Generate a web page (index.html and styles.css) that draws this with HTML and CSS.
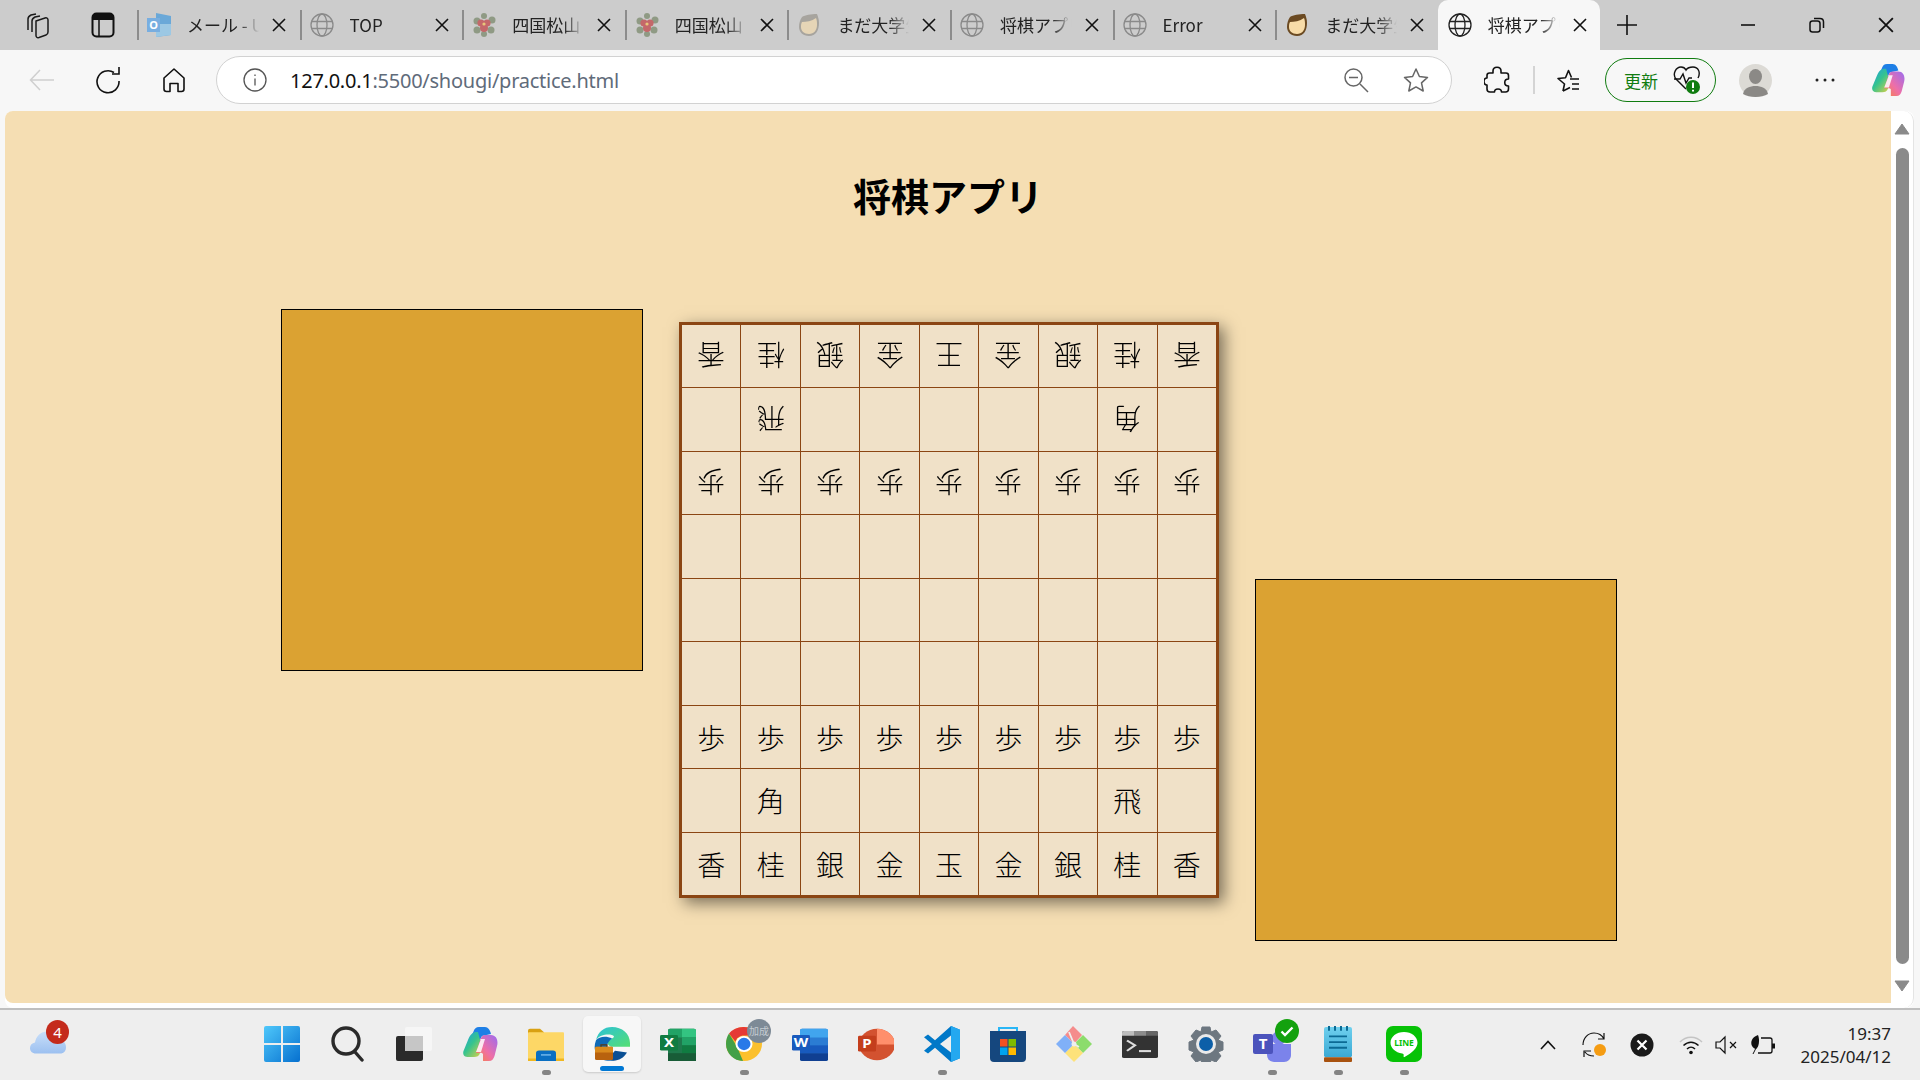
FILE: index.html

```html
<!DOCTYPE html>
<html lang="ja">
<head>
    <meta charset="UTF-8">
    <title>将棋アプリ</title>
    <link rel="stylesheet" href="styles.css">
</head>
<body>

    <svg class="defs" width="0" height="0">
        <defs>
            <symbol id="globe" viewBox="0 0 24 24">
                <g fill="none" stroke="currentColor" stroke-width="1.3">
                    <circle cx="12" cy="12" r="11"/>
                    <ellipse cx="12" cy="12" rx="5" ry="11"/>
                    <path d="M1.5 8.5h21M1.5 15.5h21"/>
                </g>
            </symbol>
            <symbol id="close" viewBox="0 0 14 14">
                <path d="M1 1l12 12M13 1L1 13" fill="none" stroke="currentColor" stroke-width="1.6"/>
            </symbol>
            <symbol id="flower" viewBox="0 0 24 24">
                <g fill="#8f9a84">
                    <circle cx="5" cy="8" r="3.5"/><circle cx="20" cy="7" r="3.5"/><circle cx="5" cy="17" r="3.5"/><circle cx="19" cy="17" r="3.5"/><circle cx="12" cy="3" r="3"/><circle cx="12" cy="21" r="3"/>
                </g>
                <g fill="#c4686a">
                    <circle cx="9" cy="10" r="3.6"/><circle cx="15" cy="10" r="3.6"/><circle cx="12" cy="15" r="4"/>
                </g>
                <circle cx="12" cy="11" r="1.6" fill="#e8c77a"/>
            </symbol>
            <symbol id="face" viewBox="0 0 24 24">
                <path d="M5 4c3-2 9-3 15-3 1 3 2 5 2 9 0 7-3 13-10 13C6 23 2 19 2 14c0-4 1-7 3-10z" fill="currentColor"/>
                <path d="M5 9c4 0 10-1 14-4 1 2 1 5 1 7 0 5-3 9-8 9-5 0-8-3-8-7 0-2 0-3 1-5z" fill="#f8dca8"/>
            </symbol>
            <linearGradient id="cp1" x1="0" y1="0" x2="1" y2="1">
                <stop offset="0" stop-color="#1b9de8"/><stop offset=".45" stop-color="#36c48d"/><stop offset="1" stop-color="#f4d23c"/>
            </linearGradient>
            <linearGradient id="cp2" x1="1" y1="0" x2="0" y2="1">
                <stop offset="0" stop-color="#9a6cf0"/><stop offset=".55" stop-color="#ee6fa8"/><stop offset="1" stop-color="#f7843d"/>
            </linearGradient>
            <symbol id="copilot" viewBox="0 0 36 36">
                <path d="M23 1h-6c-3 0-4.500 1.500-5.500 4.500L5 20l8 3 7-13 9-2c-1-4-3-7-6-7z" fill="#1e7fe6"/>
                <path d="M13 6C10 7 8 9 6 14L1.500 25c-1 3 .5 6 4 6H12c3 0 5-1 6-4l4-12-4-1-2-8z" fill="url(#cp1)"/>
                <path d="M21 35h6c3 0 4.500-2 5.500-5L35 20c1.500-5-.5-11-6-11h-6c-2 0-3 1-4 3l-5 15c3 0 6-1 7 1z" fill="url(#cp2)"/>
                <path d="M19 13h4l-4 13h-5z" fill="#fff" opacity=".85"/>
            </symbol>
        </defs>
    </svg>

    <div class="tabstrip">
        <div class="strip-tools">
            <svg width="28" height="28" viewBox="0 0 28 28" fill="none" stroke="#1a1a1a" stroke-width="1.500">
                <path d="M4 19V8c0-2 1-3 3-4l5-1"/>
                <path d="M8 21V10c0-2 1-3 3-4l5-1"/>
                <path d="M12 10l9-3c2-.5 3 .5 3 2v12c0 1.500-.5 2.500-2 3l-7 2.500c-2 .5-3-.5-3-2z"/>
            </svg>
            <svg width="24" height="26" viewBox="0 0 24 26">
                <rect x="1.500" y="1.500" width="21" height="23" rx="4" fill="none" stroke="#111" stroke-width="2"/>
                <path d="M1.500 5.500a4 4 0 0 1 4-4h13a4 4 0 0 1 4 4V8h-21z" fill="#111"/>
                <path d="M8 8v16" stroke="#111" stroke-width="1.500"/>
            </svg>
        </div>

        <div class="tab">
            <svg class="favicon" viewBox="0 0 24 24">
                <path d="M9 0l15 3v19l-15 2z" fill="#6aa8d8"/>
                <path d="M9 11h15v11l-15 2z" fill="#9cc8e4"/>
                <rect x="0" y="5" width="13" height="14" fill="#78aee0"/>
                <text x="6.500" y="16" class="fav-letter">O</text>
            </svg>
            <span class="tab-title">メール - UI</span>
            <svg class="tab-close"><use href="#close"/></svg>
        </div>
        <div class="tab">
            <svg class="favicon globe-dim"><use href="#globe"/></svg>
            <span class="tab-title">TOP</span>
            <svg class="tab-close"><use href="#close"/></svg>
        </div>
        <div class="tab">
            <svg class="favicon"><use href="#flower"/></svg>
            <span class="tab-title">四国松山</span>
            <svg class="tab-close"><use href="#close"/></svg>
        </div>
        <div class="tab">
            <svg class="favicon"><use href="#flower"/></svg>
            <span class="tab-title">四国松山</span>
            <svg class="tab-close"><use href="#close"/></svg>
        </div>
        <div class="tab">
            <svg class="favicon face-dim"><use href="#face"/></svg>
            <span class="tab-title">まだ大学生</span>
            <svg class="tab-close"><use href="#close"/></svg>
        </div>
        <div class="tab">
            <svg class="favicon globe-dim"><use href="#globe"/></svg>
            <span class="tab-title">将棋アプリ</span>
            <svg class="tab-close"><use href="#close"/></svg>
        </div>
        <div class="tab">
            <svg class="favicon globe-dim"><use href="#globe"/></svg>
            <span class="tab-title">Error</span>
            <svg class="tab-close"><use href="#close"/></svg>
        </div>
        <div class="tab">
            <svg class="favicon face-bright"><use href="#face"/></svg>
            <span class="tab-title">まだ大学生</span>
            <svg class="tab-close"><use href="#close"/></svg>
        </div>
        <div class="tab active">
            <svg class="favicon"><use href="#globe"/></svg>
            <span class="tab-title">将棋アプリ</span>
            <svg class="tab-close"><use href="#close"/></svg>
        </div>

        <svg class="new-tab" width="22" height="22" viewBox="0 0 22 22">
            <path d="M11 1v20M1 11h20" stroke="#111" stroke-width="1.600"/>
        </svg>

        <div class="window-btns">
            <div class="window-btn">
                <svg width="16" height="16" viewBox="0 0 16 16"><path d="M1 8h14" stroke="#111" stroke-width="1.600"/></svg>
            </div>
            <div class="window-btn">
                <svg width="16" height="16" viewBox="0 0 16 16" fill="none" stroke="#111" stroke-width="1.500">
                    <rect x="1" y="4" width="10" height="11" rx="2.500"/>
                    <path d="M5 1.500h6c2 0 3.500 1.500 3.500 3.500v6"/>
                </svg>
            </div>
            <div class="window-btn">
                <svg width="16" height="16"><use href="#close"/></svg>
            </div>
        </div>
    </div>

    <div class="toolbar">
        <div class="nav-btn">
            <svg width="26" height="24" viewBox="0 0 26 24" fill="none" stroke="#cfcfcf" stroke-width="1.500"><path d="M25 12H2M11 2L1.500 12 11 22"/></svg>
        </div>
        <div class="nav-btn">
            <svg width="26" height="28" viewBox="0 0 26 28" fill="none" stroke="#111" stroke-width="1.600"><path d="M19 6.500A11 11 0 1 0 24 15"/><path d="M24 1v7h-7"/></svg>
        </div>
        <div class="nav-btn">
            <svg width="24" height="26" viewBox="0 0 24 26" fill="none" stroke="#111" stroke-width="1.600" stroke-linejoin="round"><path d="M2 11L12 2l10 9v11c0 1.500-1 2.500-2.500 2.500H16v-8H8v8H4.500C3 24.500 2 23.500 2 22z"/></svg>
        </div>

        <div class="address">
            <svg class="address-info" width="24" height="24" viewBox="0 0 24 24" fill="none" stroke="#555" stroke-width="1.300">
                <circle cx="12" cy="12" r="11"/><path d="M12 10.500v7M12 6.500v1.600"/>
            </svg>
            <span class="url"><span class="url-host">127.0.0.1</span>:5500/shougi/practice.html</span>
            <svg class="address-zoom" width="26" height="26" viewBox="0 0 26 26" fill="none" stroke="#666" stroke-width="1.500">
                <circle cx="10.500" cy="10.500" r="8.500"/><path d="M6 10.500h9M17 17l8 8"/>
            </svg>
            <svg class="address-star" width="26" height="26" viewBox="0 0 26 26" fill="none" stroke="#666" stroke-width="1.500" stroke-linejoin="round">
                <path d="M13 2l3.400 7.500 8.100.9-6 5.500 1.700 8.100-7.200-4.100L5.800 24l1.700-8.100-6-5.500 8.100-.9z"/>
            </svg>
        </div>

        <div class="tool-btn tool-ext">
            <svg width="26" height="28" viewBox="0 0 26 28" fill="none" stroke="#111" stroke-width="1.600" stroke-linejoin="round">
                <path d="M9 5c0-5 8-5 8 0v2h5c1.500 0 2.500 1 2.500 2.500V13c-5 0-5 7 0 7v3c0 2-1 3-3 3h-4c0-4-7-4-7 0H6c-2 0-3-1-3-3v-4C-1 19-1 12 3 12V9.500C3 8 4 7 5.500 7H9z"/>
            </svg>
        </div>
        <div class="tool-sep"></div>
        <div class="tool-btn tool-fav">
            <svg width="26" height="26" viewBox="0 0 26 26" fill="none" stroke="#111" stroke-width="1.600" stroke-linejoin="round">
                <path d="M9 24l1.500-7L4 11.500l7.500-.7L14.500 3.500l3 7"/>
                <path d="M9 24l7-3.500M16 12h9M18 17h7M18 22h7"/>
            </svg>
        </div>
        <div class="update">
            <span>更新</span>
            <svg width="28" height="30" viewBox="0 0 28 30">
                <path d="M13 24L3 14C-1 9 3 2 8 2c2 0 4 1 5 3 2-3 5-3 7-3 5 0 8 5 5 11" fill="none" stroke="#111" stroke-width="1.400"/>
                <path d="M1 14h6l3-5 3 9 3-5h3" fill="none" stroke="#111" stroke-width="1.400"/>
                <circle cx="20" cy="22" r="7" fill="#107c10"/>
                <path d="M20 17.500v5.500M20 24.800v1.800" stroke="#fff" stroke-width="2"/>
            </svg>
        </div>
        <div class="avatar">
            <svg width="33" height="33" viewBox="0 0 33 33">
                <circle cx="16.500" cy="16.500" r="16.500" fill="#dcdad5"/>
                <ellipse cx="16.500" cy="12.500" rx="6.500" ry="7.500" fill="#8b8986"/>
                <path d="M4 30c1-6 7-8 12.500-8S28 24 29 30c-3 2-8 3-12.500 3S7 32 4 30z" fill="#8b8986"/>
            </svg>
        </div>
        <div class="tool-btn tool-more">
            <svg width="20" height="4" viewBox="0 0 20 4" fill="#222"><circle cx="2" cy="2" r="1.500"/><circle cx="10" cy="2" r="1.500"/><circle cx="18" cy="2" r="1.500"/></svg>
        </div>
        <svg class="tool-copilot" width="34" height="36"><use href="#copilot"/></svg>
    </div>

    <div class="viewport">
        <main class="page">
            <h1 class="title">将棋アプリ</h1>
            <div class="game">
                <div class="stand stand-gote"></div>

                <div class="board">
                    <div class="cell"><span class="gote">香</span></div><div class="cell"><span class="gote">桂</span></div><div class="cell"><span class="gote">銀</span></div><div class="cell"><span class="gote">金</span></div><div class="cell"><span class="gote">王</span></div><div class="cell"><span class="gote">金</span></div><div class="cell"><span class="gote">銀</span></div><div class="cell"><span class="gote">桂</span></div><div class="cell"><span class="gote">香</span></div>
                    <div class="cell"></div><div class="cell"><span class="gote">飛</span></div><div class="cell"></div><div class="cell"></div><div class="cell"></div><div class="cell"></div><div class="cell"></div><div class="cell"><span class="gote">角</span></div><div class="cell"></div>
                    <div class="cell"><span class="gote">歩</span></div><div class="cell"><span class="gote">歩</span></div><div class="cell"><span class="gote">歩</span></div><div class="cell"><span class="gote">歩</span></div><div class="cell"><span class="gote">歩</span></div><div class="cell"><span class="gote">歩</span></div><div class="cell"><span class="gote">歩</span></div><div class="cell"><span class="gote">歩</span></div><div class="cell"><span class="gote">歩</span></div>
                    <div class="cell"></div><div class="cell"></div><div class="cell"></div><div class="cell"></div><div class="cell"></div><div class="cell"></div><div class="cell"></div><div class="cell"></div><div class="cell"></div>
                    <div class="cell"></div><div class="cell"></div><div class="cell"></div><div class="cell"></div><div class="cell"></div><div class="cell"></div><div class="cell"></div><div class="cell"></div><div class="cell"></div>
                    <div class="cell"></div><div class="cell"></div><div class="cell"></div><div class="cell"></div><div class="cell"></div><div class="cell"></div><div class="cell"></div><div class="cell"></div><div class="cell"></div>
                    <div class="cell">歩</div><div class="cell">歩</div><div class="cell">歩</div><div class="cell">歩</div><div class="cell">歩</div><div class="cell">歩</div><div class="cell">歩</div><div class="cell">歩</div><div class="cell">歩</div>
                    <div class="cell"></div><div class="cell">角</div><div class="cell"></div><div class="cell"></div><div class="cell"></div><div class="cell"></div><div class="cell"></div><div class="cell">飛</div><div class="cell"></div>
                    <div class="cell">香</div><div class="cell">桂</div><div class="cell">銀</div><div class="cell">金</div><div class="cell">玉</div><div class="cell">金</div><div class="cell">銀</div><div class="cell">桂</div><div class="cell">香</div>
                </div>

                <div class="stand stand-sente"></div>
            </div>
        </main>
        <div class="scrollbar">
            <svg width="16" height="12" viewBox="0 0 16 12"><path d="M8 1l7 10H1z" fill="#8a8a8a" stroke="#8a8a8a" stroke-linejoin="round"/></svg>
            <div class="scroll-thumb"></div>
            <svg width="16" height="12" viewBox="0 0 16 12"><path d="M8 11L1 1h14z" fill="#8a8a8a" stroke="#8a8a8a" stroke-linejoin="round"/></svg>
        </div>
    </div>

    <div class="taskbar">
        <div class="weather">
            <svg width="36" height="24" viewBox="0 0 36 24">
                <defs><linearGradient id="cloud" x1="0" y1="0" x2="0" y2="1"><stop offset="0" stop-color="#c9dff9"/><stop offset="1" stop-color="#9cc0f0"/></linearGradient></defs>
                <path d="M6 23.500C2 23.500 0 21 0 18s2-5 5-5.500C6 6 11 1.500 17 1.500S27 5 29 10c4 0 7 3 7 7s-2 6.500-6 6.500z" fill="url(#cloud)"/>
            </svg>
            <span class="weather-badge">4</span>
        </div>

        <div class="apps">
            <div class="app">
                <svg width="36" height="36" viewBox="0 0 36 36">
                    <defs><linearGradient id="win" x1="0" y1="0" x2="1" y2="1"><stop offset="0" stop-color="#4fc8fb"/><stop offset="1" stop-color="#0670cf"/></linearGradient></defs>
                    <path d="M2 0h15v17H0V2a2 2 0 0 1 2-2zM19 0h15a2 2 0 0 1 2 2v15H19zM0 19h17v17H2a2 2 0 0 1-2-2zM19 19h17v15a2 2 0 0 1-2 2H19z" fill="url(#win)"/>
                </svg>
            </div>
            <div class="app">
                <svg width="34" height="36" viewBox="0 0 34 36" fill="none" stroke="#2a2a2a" stroke-width="3.400" stroke-linecap="round">
                    <circle cx="15" cy="15" r="13"/><path d="M24 26l7 8"/>
                </svg>
            </div>
            <div class="app">
                <svg width="36" height="34" viewBox="0 0 36 34">
                    <rect x="0" y="9" width="27" height="25" rx="2" fill="#2a2a2a"/>
                    <rect x="9" y="0" width="27" height="24" rx="2" fill="#f6f6f6"/>
                    <rect x="9" y="9" width="18" height="15" fill="#c6c6c6"/>
                </svg>
            </div>
            <div class="app">
                <svg width="36" height="36"><use href="#copilot"/></svg>
            </div>
            <div class="app running">
                <svg width="36" height="33" viewBox="0 0 36 38" preserveAspectRatio="none">
                    <path d="M0 3a2 2 0 0 1 2-2h10l4 4v8H0z" fill="#d9a112"/>
                    <rect x="0" y="5" width="36" height="33" rx="1" fill="#fdd766"/>
                    <path d="M0 35h36v3H0z" fill="#f0b71f"/>
                    <path d="M8 38v-9c0-2 1-3 3-3h14c2 0 3 1 3 3v9z" fill="#0a6fc2"/>
                    <path d="M13 31h10" stroke="#7fc0f0" stroke-width="1.500"/>
                </svg>
            </div>
            <div class="app edge">
                <svg width="36" height="36" viewBox="0 0 36 38" preserveAspectRatio="none">
                    <defs><linearGradient id="edge" x1="0" y1="0" x2="1" y2="1"><stop offset="0" stop-color="#2cc1d8"/><stop offset="1" stop-color="#54df72"/></linearGradient></defs>
                    <path d="M2 15C4 6 10 1 18 1c10 0 18 7 18 17v4H19c-3 0-6-2-5-5 1-4 5-3 6-6-2-3-14-3-18 4z" fill="url(#edge)"/>
                    <path d="M2 15c-3 8-1 16 6 20 6 3 15 2 19-3-7 2-13-1-14-7-1-5 1-8 5-12C12 10 5 11 2 15z" fill="#0f6ab8"/>
                    <path d="M16 36c6 2 13-1 17-8l-12-2c-3 3-5 7-5 10z" fill="#0a4f94"/>
                    <rect x="1" y="22" width="18" height="14" rx="1.500" fill="#b8620e"/>
                    <path d="M1 23.500A1.500 1.500 0 0 1 2.500 22h15a1.500 1.500 0 0 1 1.500 1.500V28H1z" fill="#d98a1c"/>
                    <path d="M7 22v-2h6v2" fill="none" stroke="#5a3a14" stroke-width="1.300"/>
                </svg>
                <span class="edge-bar"></span>
            </div>
            <div class="app">
                <svg width="36" height="33" viewBox="0 0 36 38" preserveAspectRatio="none">
                    <rect x="8" y="1" width="28" height="37" rx="2" fill="#1f7a4d"/>
                    <path d="M22 1h12a2 2 0 0 1 2 2v8H22z" fill="#33c481"/>
                    <path d="M8 3a2 2 0 0 1 2-2h12v10H8z" fill="#21a366"/>
                    <rect x="22" y="11" width="14" height="9" fill="#21a366"/>
                    <rect x="22" y="20" width="14" height="9" fill="#107c41"/>
                    <rect x="8" y="29" width="28" height="9" fill="#185c37"/>
                    <rect x="0" y="8" width="18" height="18" rx="1.500" fill="#107c41"/>
                    <text x="9" y="22" class="app-letter">X</text>
                </svg>
            </div>
            <div class="app running">
                <svg width="36" height="36" viewBox="0 0 36 38" preserveAspectRatio="none">
                    <circle cx="18" cy="19" r="18" fill="#fbc02d"/>
                    <path d="M18 1a18 18 0 0 1 15.600 9H18c-4 0-7.500 2.500-8.500 6.500L3 8A18 18 0 0 1 18 1z" fill="#e53935"/>
                    <path d="M3 8l8 14 6 14.900C8 37 0 29 0 19c0-4 1-8 3-11z" fill="#43a047"/>
                    <circle cx="18" cy="19" r="8.500" fill="#fff"/>
                    <circle cx="18" cy="19" r="6.500" fill="#2979e8"/>
                </svg>
                <span class="chrome-badge">加成</span>
            </div>
            <div class="app">
                <svg width="36" height="33" viewBox="0 0 36 38" preserveAspectRatio="none">
                    <rect x="8" y="1" width="28" height="37" rx="2" fill="#2b7cd3"/>
                    <path d="M8 3a2 2 0 0 1 2-2h24a2 2 0 0 1 2 2v8H8z" fill="#41a5ee"/>
                    <rect x="8" y="20" width="28" height="9" fill="#185abd"/>
                    <path d="M8 29h28v7a2 2 0 0 1-2 2H10a2 2 0 0 1-2-2z" fill="#103f91"/>
                    <rect x="0" y="8" width="18" height="18" rx="1.500" fill="#185abd"/>
                    <text x="9" y="22" class="app-letter">W</text>
                </svg>
            </div>
            <div class="app">
                <svg width="36" height="33" viewBox="0 0 36 38" preserveAspectRatio="none">
                    <circle cx="19" cy="19" r="18" fill="#d35230"/>
                    <path d="M19 1a18 18 0 0 1 18 18H19z" fill="#ff8f6b"/>
                    <rect x="0" y="9" width="18" height="18" rx="1.500" fill="#c43e1c"/>
                    <text x="9" y="23" class="app-letter">P</text>
                </svg>
            </div>
            <div class="app running">
                <svg width="36" height="36" viewBox="0 0 36 38" preserveAspectRatio="none">
                    <path d="M27 0l9 4v30l-9 4L11 23l-7 6-4-3 8-7-8-7 4-3 7 6z" fill="#0078c8"/>
                    <path d="M27 0l9 4v30l-9 4z" fill="#24a8f0"/>
                    <path d="M27 10L16 19l11 9z" fill="#efefef"/>
                </svg>
            </div>
            <div class="app">
                <svg width="36" height="36" viewBox="0 0 36 36">
                    <path d="M9 7V2h18v5" fill="none" stroke="#29b6f6" stroke-width="2"/>
                    <path d="M0 5h36v27a4 4 0 0 1-4 4H4a4 4 0 0 1-4-4z" fill="#15477e"/>
                    <rect x="10" y="13" width="7.500" height="7.500" fill="#f25022"/>
                    <rect x="18.500" y="13" width="7.500" height="7.500" fill="#7fba00"/>
                    <rect x="10" y="21.500" width="7.500" height="7.500" fill="#00a4ef"/>
                    <rect x="18.500" y="21.500" width="7.500" height="7.500" fill="#ffb900"/>
                </svg>
            </div>
            <div class="app">
                <svg width="36" height="36" viewBox="0 0 36 36">
                    <path d="M18 18L9 9l8-9 9 9z" fill="#f58c8c"/>
                    <path d="M18 18l9-9 9 9-9 9z" fill="#8cdc6c"/>
                    <path d="M18 18l9 9-9 9-9-9z" fill="#fde27a"/>
                    <path d="M18 18l-9 9-9-9 9-9z" fill="#80b0f8"/>
                    <circle cx="18" cy="18" r="2.500" fill="#eee"/>
                    <path d="M13 6l5 12 5 3" fill="none" stroke="#eee" stroke-width="1.800"/>
                </svg>
            </div>
            <div class="app">
                <svg width="36" height="27" viewBox="0 0 36 34" preserveAspectRatio="none">
                    <rect width="36" height="34" rx="2" fill="#333"/>
                    <path d="M0 2a2 2 0 0 1 2-2h10v6H0z" fill="#bdbdbd"/>
                    <rect x="12" y="0" width="12" height="6" fill="#8c8c8c"/>
                    <path d="M24 0h10a2 2 0 0 1 2 2v4H24z" fill="#666"/>
                    <path d="M5 12l8 6-8 7" fill="none" stroke="#ddd" stroke-width="2.400"/>
                    <rect x="17" y="24" width="12" height="2.600" fill="#ddd"/>
                </svg>
            </div>
            <div class="app">
                <svg width="36" height="36" viewBox="0 0 36 36">
                    <path d="M14 1h8l1 5 5-2 5 6-3 4 5 2v8l-5 2 3 4-5 6-5-2-1 4h-8l-1-4-5 2-5-6 3-4-5-2v-8l5-2-3-4 5-6 5 2z" fill="#6d7780" stroke="#6d7780" stroke-width="1" stroke-linejoin="round"/>
                    <circle cx="18" cy="18" r="10" fill="#eaeaea"/>
                    <circle cx="18" cy="18" r="7" fill="#0c5fa8"/>
                </svg>
            </div>
            <div class="app running">
                <svg width="38" height="40" viewBox="0 0 38 40">
                    <circle cx="26" cy="14" r="7" fill="#7b83eb"/>
                    <path d="M14 20h24v11c0 4-3 7-7 7h-10c-4 0-7-3-7-7z" fill="#7b83eb"/>
                    <rect x="0" y="10" width="20" height="20" rx="2" fill="#4b53bc"/>
                    <text x="10" y="25" class="app-letter">T</text>
                </svg>
                <svg class="teams-check" width="24" height="24" viewBox="0 0 24 24">
                    <circle cx="12" cy="12" r="12" fill="#13a10e"/>
                    <path d="M6.500 12.500l3.500 3.500 7.500-7.500" fill="none" stroke="#fff" stroke-width="2.400"/>
                </svg>
            </div>
            <div class="app running">
                <svg width="28" height="36" viewBox="0 0 28 38" preserveAspectRatio="none">
                    <defs><linearGradient id="note" x1="0" y1="0" x2="0" y2="1"><stop offset="0" stop-color="#6fd0ee"/><stop offset="1" stop-color="#3aa9d4"/></linearGradient></defs>
                    <rect y="1" width="28" height="32" rx="2" fill="url(#note)"/>
                    <rect y="33" width="28" height="5" rx="1" fill="#a8520f"/>
                    <path d="M5 0v5M11 0v5M17 0v5M23 0v5" stroke="#0b6a94" stroke-width="2"/>
                    <path d="M5 11h18M5 17h18M5 23h18" stroke="#0b6a94" stroke-width="2"/>
                </svg>
            </div>
            <div class="app running">
                <svg width="36" height="36" viewBox="0 0 36 36">
                    <rect width="36" height="36" rx="7" fill="#06c206"/>
                    <path d="M18 6c7.500 0 13.500 4.700 13.500 10.700 0 5.500-6 10.500-13 14.300-1 .5-1-.5-.8-2 0-1-.5-1.500-1.500-1.600C9.500 26.500 4.500 22 4.500 16.700 4.500 10.700 10.500 6 18 6z" fill="#fff"/>
                    <text x="18" y="20" class="line-word">LINE</text>
                </svg>
            </div>
        </div>

        <div class="tray">
            <div class="tray-slot">
                <svg width="16" height="10" viewBox="0 0 16 10" fill="none" stroke="#111" stroke-width="1.600"><path d="M1 9l7-7.500L15 9"/></svg>
            </div>
            <div class="tray-slot">
                <svg width="26" height="26" viewBox="0 0 26 26">
                    <g fill="none" stroke="#111" stroke-width="1.200">
                        <path d="M1 13C1 6 6 1 12 1c4 0 8 2 10 6M22 1v6h-6"/>
                        <path d="M12 24c-4 0-7-1-9-4M2 25v-6h7"/>
                    </g>
                    <circle cx="18" cy="18" r="6" fill="#f59c12"/>
                </svg>
            </div>
            <div class="tray-slot">
                <svg width="24" height="24" viewBox="0 0 24 24">
                    <circle cx="12" cy="12" r="11.500" fill="#1a1a1a"/>
                    <path d="M7.500 7.500l9 9M16.500 7.500l-9 9" stroke="#fff" stroke-width="2.200"/>
                </svg>
            </div>
            <div class="tray-slot tray-small tray-wifi">
                <svg width="24" height="20" viewBox="0 0 24 20" fill="none" stroke-width="1.500">
                    <path d="M1 7c6-6.500 16-6.500 22 0" stroke="#c4c4c4"/>
                    <path d="M4.500 10.500c4.500-4.500 10.500-4.500 15 0M8 14c2.500-2.500 5.500-2.500 8 0" stroke="#111"/>
                    <circle cx="12" cy="17.500" r="1.800" fill="#111"/>
                </svg>
            </div>
            <div class="tray-slot tray-small">
                <svg width="24" height="20" viewBox="0 0 24 20" fill="none" stroke="#111" stroke-width="1.200">
                    <path d="M1 7h4l5-5v16l-5-5H1z"/><path d="M15 7l6 6M21 7l-6 6"/>
                </svg>
            </div>
            <div class="tray-slot tray-small">
                <svg width="26" height="24" viewBox="0 0 26 24">
                    <path d="M11 5h9c1.500 0 2 1 2 2v11c0 1-.5 2-2 2H8" fill="none" stroke="#111" stroke-width="1.300"/>
                    <rect x="22" y="10.500" width="3" height="5" fill="#111"/>
                    <path d="M8 2C2 4 0 9 2 13c1 2 3 3 4 3 3-2 4-9 2-14z" fill="#111"/>
                    <path d="M3 21l3-6" stroke="#111"/>
                </svg>
            </div>
            <div class="clock">
                <span>19:37</span>
                <span>2025/04/12</span>
            </div>
        </div>
    </div>

</body>
</html>
```

FILE: styles.css

```css
*{
    box-sizing: border-box;
}

html, body{
    margin: 0;
    height: 100%;
    overflow: hidden;
}

body{
    width: 1920px;
    height: 1080px;
    background-color: #f7f7f7;
    font-family: "Noto Sans", "Noto Sans CJK JP", sans-serif;
    color: #111;
}

.defs{
    display: block;
    height: 0;
}

/* tabs */
.tabstrip{
    display: flex;
    align-items: stretch;
    height: 50px;
    background-color: #cccccc;
}

.strip-tools{
    display: flex;
    align-items: center;
    gap: 39px;
    width: 137px;
    padding-left: 24px;
}

.tab{
    display: flex;
    align-items: center;
    flex: none;
    width: 162.6px;
    color: #222;
}

.tab::before{
    content: "";
    flex: none;
    width: 2px;
    height: 30px;
    margin-right: 8px;
    background-color: #8c8c8c;
}

.tab.active{
    background-color: #f7f7f7;
    border-radius: 10px 10px 0 0;
}

.tab.active::before{
    background-color: transparent;
}

.favicon{
    flex: none;
    width: 24px;
    height: 24px;
}

.globe-dim{
    color: #8a8a8a;
}

.face-dim{
    color: #8f8a80;
    opacity: 0.6;
}

.face-bright{
    color: #6b4a22;
}

.fav-letter{
    font: bold 11px "Noto Sans", sans-serif;
    fill: #fff;
    text-anchor: middle;
}

.tab-title{
    flex: none;
    width: 72px;
    margin-left: 16px;
    font-family: "Noto Sans CJK JP", sans-serif;
    font-size: 17px;
    line-height: 24px;
    white-space: nowrap;
    overflow: hidden;
    -webkit-mask-image: linear-gradient(to right, #000 72%, transparent 100%);
    mask-image: linear-gradient(to right, #000 72%, transparent 100%);
}

.tab-close{
    flex: none;
    width: 14px;
    height: 14px;
    margin-left: 13px;
    color: #111;
}

.new-tab{
    align-self: center;
    margin-left: 16px;
}

.window-btns{
    display: flex;
    margin-left: auto;
}

.window-btn{
    display: flex;
    align-items: center;
    justify-content: center;
    width: 69px;
}

/* address bar row */
.toolbar{
    display: flex;
    align-items: center;
    height: 60px;
    padding-left: 9px;
}

.nav-btn{
    display: flex;
    justify-content: center;
    flex: none;
    width: 66px;
}

.address{
    display: flex;
    align-items: center;
    flex: none;
    width: 1236px;
    height: 48px;
    margin-left: 9px;
    padding: 0 22px 0 26px;
    background-color: #fff;
    border: 1.5px solid #d2d2d2;
    border-radius: 24px;
}

.address-info{
    flex: none;
    margin-right: 23px;
}

.url{
    flex: 1;
    font-size: 20px;
    color: #5f6b7a;
    letter-spacing: -0.25px;
}

.url-host{
    color: #111;
}

.address-star{
    margin-left: 34px;
}

.tool-btn{
    display: flex;
    align-items: center;
    justify-content: center;
    flex: none;
    width: 40px;
}

.tool-ext{
    margin-left: 25px;
}

.tool-sep{
    flex: none;
    width: 2px;
    height: 28px;
    margin-left: 16px;
    background-color: #d4d4d4;
}

.tool-fav{
    margin-left: 12px;
}

.update{
    display: flex;
    align-items: center;
    justify-content: space-between;
    flex: none;
    width: 111px;
    height: 44px;
    margin-left: 18px;
    padding: 0 14px 0 18px;
    border: 1.5px solid #107c10;
    border-radius: 22px;
    color: #107c10;
    font-size: 17px;
}

.avatar{
    display: flex;
    flex: none;
    margin-left: 23px;
}

.tool-more{
    margin-left: 33px;
}

.tool-copilot{
    flex: none;
    margin-left: 26px;
}

/* browser viewport */
.viewport{
    display: flex;
    width: 1909px;
    height: 897px;
    margin: 1px 0 0 5px;
    background-color: #fff;
    border-radius: 8px;
}

.page{
    flex: 1;
    margin-bottom: 5px;
    background-color: #f5deb3;
    border-radius: 8px 0 0 8px;
    overflow: hidden;
}

.title{
    margin: 58px 0 0;
    font-family: "Noto Sans CJK JP", sans-serif;
    font-size: 38px;
    font-weight: 700;
    line-height: 52px;
    text-align: center;
    color: #000;
}

.game{
    display: flex;
    justify-content: center;
    align-items: flex-start;
    gap: 36px;
    margin-top: 88px;
    padding-left: 2px;
}

.stand{
    flex: none;
    width: 362px;
    height: 362px;
    background-color: #dba232;
    border: 1px solid #000;
}

.stand-sente{
    margin-top: 270px;
}

.board{
    display: grid;
    grid-template-columns: repeat(9, 1fr);
    grid-template-rows: repeat(9, 1fr);
    gap: 1px;
    flex: none;
    width: 540px;
    height: 576px;
    margin-top: 13px;
    background-color: #8b4513;
    border: 3px solid #8b4513;
    box-shadow: 5px 5px 15px rgba(0, 0, 0, 0.5);
}

.cell{
    display: flex;
    align-items: center;
    justify-content: center;
    background-color: #f0e1c8;
    font-family: "Noto Sans CJK JP", sans-serif;
    font-size: 28px;
    font-weight: 300;
    color: #000;
}

.gote{
    display: block;
    transform: rotate(180deg);
}

/* scrollbar */
.scrollbar{
    display: flex;
    flex-direction: column;
    align-items: center;
    flex: none;
    width: 23px;
    padding: 12px 0 16px;
    border-right: 1px solid #e4e4e4;
    border-radius: 0 10px 10px 0;
}

.scroll-thumb{
    width: 13px;
    height: 816px;
    margin: 13px 0 auto;
    background-color: #8a8a8a;
    border-radius: 7px;
}

/* taskbar */
.taskbar{
    display: flex;
    align-items: center;
    height: 72px;
    background-color: #eeeeee;
    border-top: 2px solid #bfbfbf;
}

.weather{
    position: relative;
    flex: none;
    width: 249px;
    padding: 0 0 7px 30px;
    line-height: 0;
}

.weather-badge{
    position: absolute;
    top: -10px;
    left: 46px;
    width: 23px;
    height: 24px;
    border-radius: 50%;
    background-color: #c42b1c;
    color: #fff;
    font-size: 15px;
    line-height: 24px;
    text-align: center;
}

.apps{
    display: flex;
}

.app{
    position: relative;
    display: flex;
    align-items: center;
    justify-content: center;
    flex: none;
    width: 66px;
    height: 56px;
    margin-top: -2px;
}

.app.running::after{
    content: "";
    position: absolute;
    left: 50%;
    bottom: -3px;
    width: 9px;
    height: 5px;
    margin-left: -4px;
    border-radius: 3px;
    background-color: #848484;
}

.edge{
    width: 58px;
    margin-left: 4px;
    margin-right: 4px;
    background-color: #f7f7f7;
    border-radius: 5px;
    box-shadow: 0 1px 2px rgba(0, 0, 0, 0.15);
}

.edge-bar{
    position: absolute;
    left: 50%;
    bottom: 1px;
    width: 24px;
    height: 5px;
    margin-left: -12px;
    border-radius: 3px;
    background-color: #0078d4;
}

.app-letter{
    font: bold 15px "Noto Sans", sans-serif;
    fill: #fff;
    text-anchor: middle;
}

.line-word{
    font: bold 8.5px "Noto Sans", sans-serif;
    fill: #06c206;
    text-anchor: middle;
}

.chrome-badge{
    position: absolute;
    top: 3px;
    left: 36px;
    width: 24px;
    height: 24px;
    border-radius: 50%;
    background-color: #7d8a96;
    color: #c4ccd2;
    font-size: 10px;
    line-height: 24px;
    text-align: center;
    white-space: nowrap;
}

.teams-check{
    position: absolute;
    top: 3px;
    left: 36px;
}

.tray{
    display: flex;
    align-items: center;
    margin-left: auto;
    padding-right: 29px;
}

.tray-slot{
    display: flex;
    align-items: center;
    justify-content: center;
    flex: none;
    width: 47px;
}

.tray-small{
    width: 36px;
}

.tray-wifi{
    margin-left: 8px;
}

.clock{
    display: flex;
    flex-direction: column;
    align-items: flex-end;
    flex: none;
    width: 110px;
    font-size: 17px;
    line-height: 23px;
    color: #222;
}
```
